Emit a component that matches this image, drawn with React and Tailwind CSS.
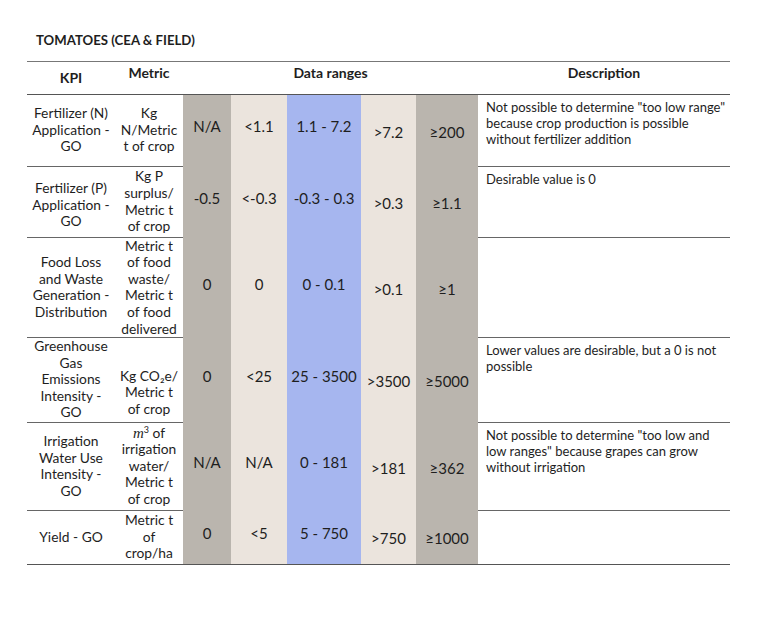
import React from 'react';

const cols = 'grid grid-cols-[88px_68px_48px_56px_74px_55px_62px_252px]';

const rows = [
  {
    h: 'h-[72px]',
    kpi: ['Fertilizer (N)', 'Application -', 'GO'],
    metric: ['Kg', 'N/Metric', 't of crop'],
    vals: ['N/A', '<1.1', '1.1 - 7.2', '>7.2', '≥200'],
    desc: ['Not possible to determine "too low range"', 'because crop production is possible', 'without fertilizer addition'],
  },
  {
    h: 'h-[71px]',
    kpi: ['Fertilizer (P)', 'Application -', 'GO'],
    kpiPad: 'pt-[7px]',
    metric: ['Kg P', 'surplus/', 'Metric t', 'of crop'],
    vals: ['-0.5', '<-0.3', '-0.3 - 0.3', '>0.3', '≥1.1'],
    desc: ['Desirable value is 0'],
  },
  {
    h: 'h-[100px]',
    kpi: ['Food Loss', 'and Waste', 'Generation -', 'Distribution'],
    metric: ['Metric t', 'of food', 'waste/', 'Metric t', 'of food', 'delivered'],
    vals: ['0', '0', '0 - 0.1', '>0.1', '≥1'],
    desc: [],
  },
  {
    h: 'h-[85px]',
    kpi: ['Greenhouse', 'Gas', 'Emissions', 'Intensity -', 'GO'],
    metric: ['Kg CO₂e/', 'Metric t', 'of crop'],
    metricPad: 'pt-[26px]',
    vals: ['0', '<25', '25 - 3500', '>3500', '≥5000'],
    desc: ['Lower values are desirable, but a 0 is not', 'possible'],
  },
  {
    h: 'h-[88px]',
    kpi: ['Irrigation', 'Water Use', 'Intensity -', 'GO'],
    metric: ['m3', 'irrigation', 'water/', 'Metric t', 'of crop'],
    vals: ['N/A', 'N/A', '0 - 181', '>181', '≥362'],
    desc: ['Not possible to determine "too low and', 'low ranges" because grapes can grow', 'without irrigation'],
  },
  {
    h: 'h-[53px]',
    kpi: ['Yield - GO'],
    metric: ['Metric t', 'of', 'crop/ha'],
    vals: ['0', '<5', '5 - 750', '>750', '≥1000'],
    desc: [],
  },
];

const valBg = ['bg-[#bab5ae]', 'bg-[#ebe4dd]', 'bg-[#a6b6ef]', 'bg-[#ebe4dd]', 'bg-[#bab5ae]'];

function Lines({ lines }) {
  return (
    <div className="flex flex-col items-center whitespace-nowrap">
      {lines.map((l) =>
        l === 'm3' ? (
          <span key={l}>
            <span className="italic font-['Liberation_Serif',serif] text-[15px]">m</span>
            <sup className="text-[9px]">3</sup> of
          </span>
        ) : (
          <span key={l}>{l}</span>
        )
      )}
    </div>
  );
}

export default function App() {
  return (
    <div className="w-[768px] h-[621px] bg-white text-[#1e1e1e] font-['Lato',sans-serif] text-[13.8px] leading-[16.6px]">
      <div className="pt-[32px] pl-[36px] font-bold text-[13.2px]">TOMATOES (CEA &amp; FIELD)</div>

      <div className="ml-[27px] mt-[12px] w-[703px] border-t border-[#777]">
        {/* header */}
        <div className={`${cols} h-[33px] border-b border-[#555] font-bold text-[14px]`}>
          <div className="flex items-center justify-center pt-[2px]">KPI</div>
          <div className="text-center pt-[3px]">Metric</div>
          <div className="col-span-5 text-center pt-[3px]">Data ranges</div>
          <div className="text-center pt-[3px]">Description</div>
        </div>

        {/* body */}
        <div className="border-b border-[#555]">
          {rows.map((r, i) => {
            const last = i === rows.length - 1;
            const line = last ? '' : 'border-b border-[#666]';
            return (
              <div key={i} className={`${cols} ${r.h}`}>
                <div className={`flex items-center justify-center text-center ${line} ${r.kpiPad || ''}`}>
                  <Lines lines={r.kpi} />
                </div>
                <div className={`flex items-center justify-center text-center ${line} ${r.metricPad || ''}`}>
                  <Lines lines={r.metric} />
                </div>
                {r.vals.map((v, j) => (
                  <div
                    key={j}
                    className={`flex items-center justify-center text-[15px] ${valBg[j]} ${j < 3 ? 'pb-[8px]' : 'pt-[3px]'}`}
                  >
                    {v}
                  </div>
                ))}
                <div className={`flex flex-col pl-[8px] pt-[4px] text-[13px] leading-[16.2px] whitespace-nowrap ${line}`}>
                  {r.desc.map((d) => (
                    <span key={d}>{d}</span>
                  ))}
                </div>
              </div>
            );
          })}
        </div>
      </div>
    </div>
  );
}
